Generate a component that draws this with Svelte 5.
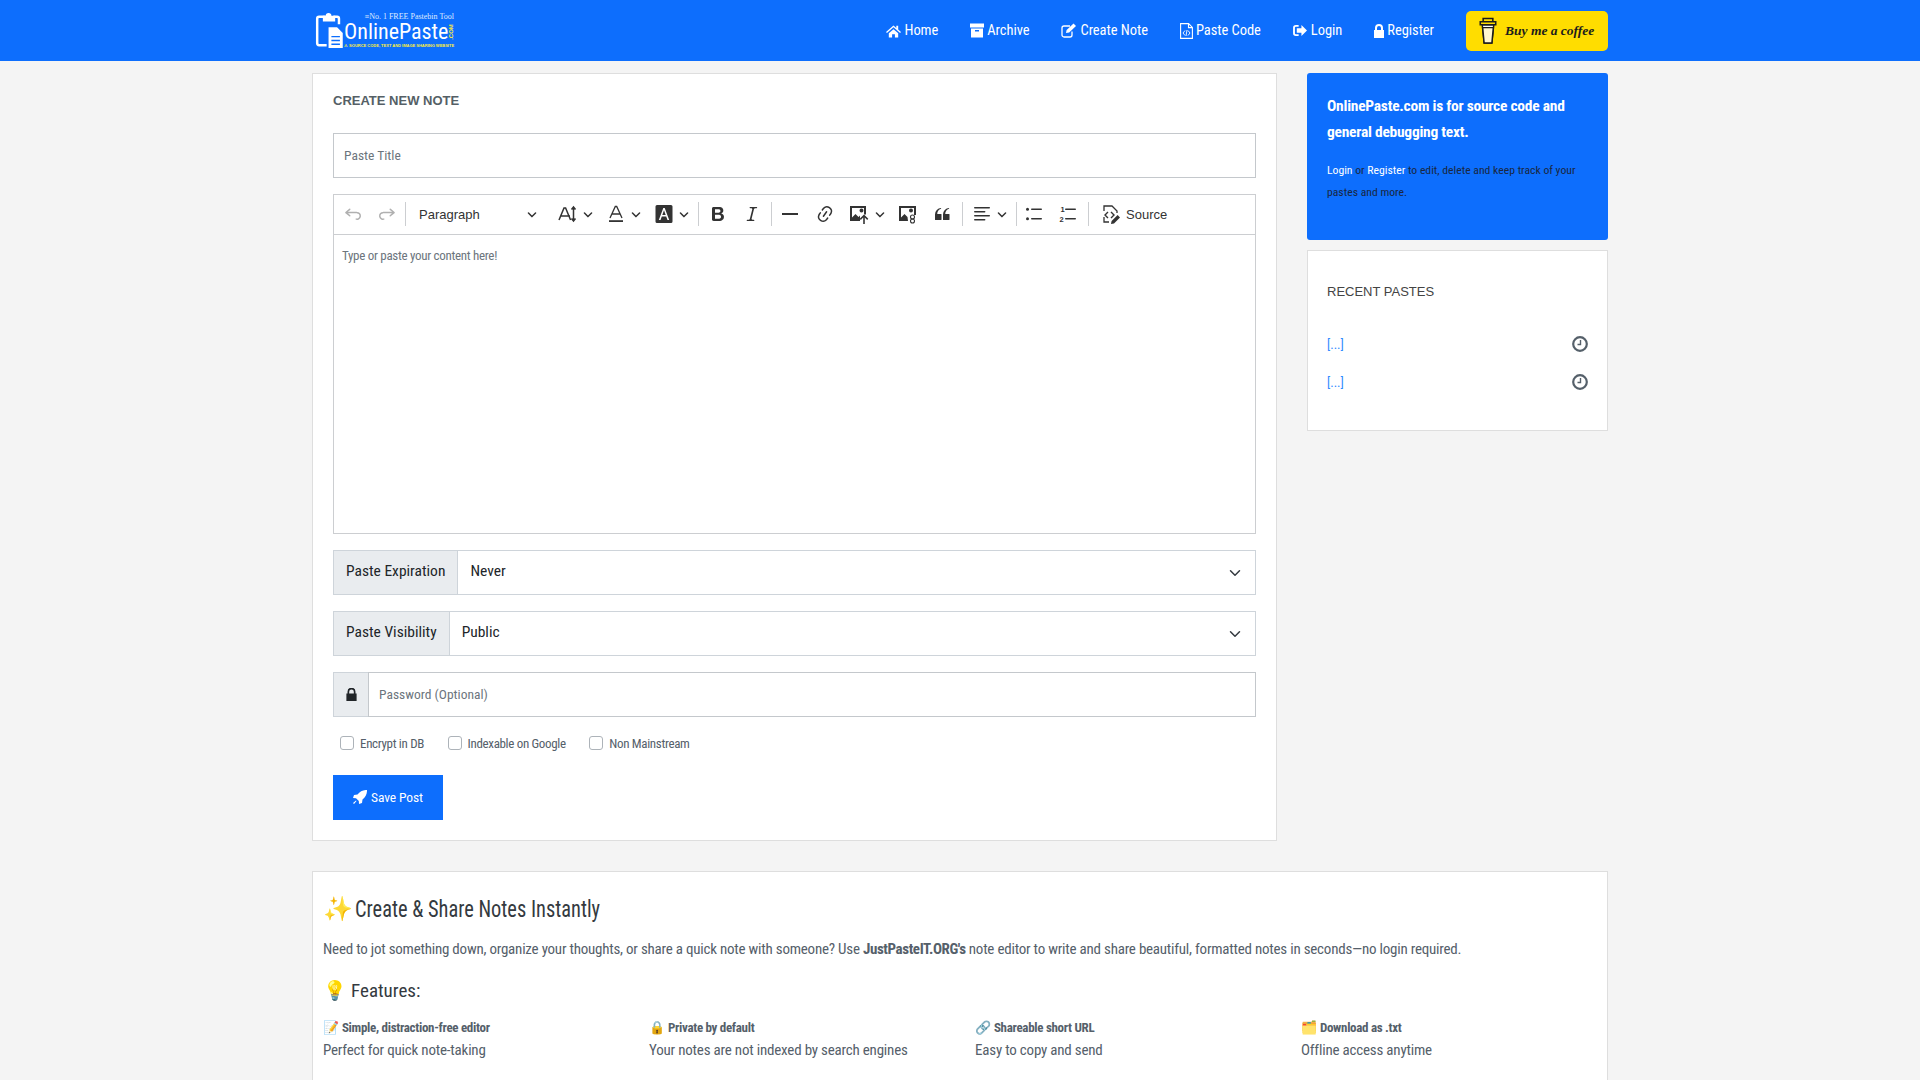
<script>
  const chevron = "M.941 4.523a.75.75 0 1 1 1.06-1.06l3.006 3.005 3.005-3.005a.75.75 0 1 1 1.06 1.06l-3.549 3.55a.75.75 0 0 1-1.168-.136L.941 4.523z";
  const features = [
    { emoji: "📝", title: "Simple, distraction-free editor", text: "Perfect for quick note-taking" },
    { emoji: "🔒", title: "Private by default", text: "Your notes are not indexed by search engines" },
    { emoji: "🔗", title: "Shareable short URL", text: "Easy to copy and send" },
    { emoji: "🗂️", title: "Download as .txt", text: "Offline access anytime" }
  ];
</script>

<nav class="navbar">
  <div class="container nav-inner">
    <div class="logo">
      <svg class="logo-icon" viewBox="0 0 30 38" width="29" height="36">
        <path d="M11 4h-7a2 2 0 0 0-2 2v26a2 2 0 0 0 2 2h8M19 4h4a2 2 0 0 1 2 2v6" fill="none" stroke="#fff" stroke-width="2.6"/>
        <path d="M8 3h3a3 3 0 0 1 6 0h4v6H8z" fill="#fff"/>
        <path d="M14 15h9l6 6v16H14z" fill="#fff"/>
        <path d="M17 25h9M17 29h9M17 33h9" stroke="#0d6efd" stroke-width="1.4"/>
      </svg>
      <div class="logo-text">
        <div class="logo-top">≡No. 1 FREE Pastebin Tool</div>
        <div class="logo-main">OnlinePaste<span class="logo-com">.COM</span></div>
        <div class="logo-sub">⚠ SOURCE CODE, TEXT AND IMAGE SHARING WEBSITE</div>
      </div>
    </div>
    <div class="nav-links">
      <a href="#a">
        <svg viewBox="0 0 16 14" width="15" height="14"><path d="M8 1 0 8l1 1 7-6 7 6 1-1-3-2.6V1.500h-2v2.200zM3 9.500 8 5l5 4.500V14H9.500v-3.500h-3V14H3z" fill="#fff"/></svg>
        Home</a>
      <a href="#a">
        <svg viewBox="0 0 14 14" width="14" height="15"><path d="M0 0h14v4H0zM1 5h12v9H1zM5 6.500v1.500h4V6.500z" fill="#fff" fill-rule="evenodd"/></svg>
        Archive</a>
      <a href="#a">
        <svg viewBox="0 0 16 15" width="16" height="15"><path d="M11 8.500V12a2 2 0 0 1-2 2H3a2 2 0 0 1-2-2V5a2 2 0 0 1 2-2h6" fill="none" stroke="#fff" stroke-width="1.300"/><path d="M5 10l.6-3L12.500.5l2.500 2.500L8.200 9.500z" fill="#fff"/></svg>
        Create Note</a>
      <a href="#a">
        <svg viewBox="0 0 13 16" width="13" height="16"><path d="M.6.6h8l3.800 3.800v11H.6zM8.500.6v4h4" fill="none" stroke="#fff" stroke-width="1.100"/><path d="M5 7.500 3 10l2 2.500M8 7.500l2 2.500-2 2.500M7 7l-1 6" fill="none" stroke="#fff" stroke-width=".9"/></svg>
        Paste Code</a>
      <a href="#a">
        <svg viewBox="0 0 16 14" width="15" height="13"><path d="M6 1H3a3 3 0 0 0-3 3v6a3 3 0 0 0 3 3h3v-2H3a1 1 0 0 1-1-1V4a1 1 0 0 1 1-1h3z" fill="#fff"/><path d="M4 4.500h5V1l6 6-6 6V9.500H4z" fill="#fff"/></svg>
        Login</a>
      <a href="#a">
        <svg viewBox="0 0 10 14" width="10" height="14"><path d="M0 6h1V4a4 4 0 0 1 8 0v2h1v8H0zm3 0h4V4a2 2 0 0 0-4 0z" fill="#fff"/></svg>
        Register</a>
      <div class="coffee">
        <svg viewBox="0 0 20 30" width="20" height="29">
          <path d="M4 9l2 19h8l2-19z" fill="#fff" stroke="#1c1c1c" stroke-width="1.500"/>
          <path d="M4.500 12l1.500 16h8l1.500-16z" fill="#fff7d0" stroke="#1c1c1c" stroke-width="1.500"/>
          <path d="M2 6h16v3H2zM5 2.500h10V6H5z" fill="#ffdd00" stroke="#1c1c1c" stroke-width="1.600"/>
        </svg>
        <span>Buy me a coffee</span>
      </div>
    </div>
  </div>
</nav>

<main class="container">
  <div class="top-row">
    <section class="card main-card">
      <h1>CREATE NEW NOTE</h1>
      <input class="title-input" type="text" placeholder="Paste Title" />
      <div class="editor">
        <div class="toolbar">
          <span class="tb w34 muted"><svg viewBox="0 0 20 20" width="20" height="20"><path d="M5.042 9.367l2.189 1.837a.75.75 0 0 1-.965 1.149l-3.788-3.18a.747.747 0 0 1-.21-.284.75.75 0 0 1 .17-.945L6.23 4.762a.75.75 0 1 1 .964 1.15L4.863 7.866h8.917A.75.75 0 0 1 14 7.9a4 4 0 1 1-1.477 7.718l.344-1.489a2.5 2.5 0 1 0 1.094-4.73l.008-.032H5.042z"/></svg></span>
          <span class="tb w34 muted"><svg viewBox="0 0 20 20" width="20" height="20"><path d="M14.958 9.367l-2.189 1.837a.75.75 0 0 0 .965 1.149l3.788-3.18a.747.747 0 0 0 .21-.284.75.75 0 0 0-.17-.945L13.77 4.762a.75.75 0 1 0-.964 1.15l2.331 1.955H6.22A.75.75 0 0 0 6 7.9a4 4 0 1 0 1.477 7.718l-.344-1.489A2.5 2.5 0 1 1 6.039 9.4l-.008-.032h8.927z"/></svg></span>
          <span class="sep"></span>
          <span class="tb paragraph"><span>Paragraph</span><svg class="chev" viewBox="0 0 10 10"><path d={chevron}/></svg></span>
          <span class="tb w49"><svg viewBox="0 0 20 20" width="20" height="20"><path d="M1 16 6 4h1.600l5 12M3 12h9" fill="none" stroke="#333" stroke-width="1.500"/><path d="M15.500 3.500v13M13.500 5.500l2-2.500 2 2.500M13.500 14.500l2 2.500 2-2.500" fill="none" stroke="#333" stroke-width="1.500"/></svg><svg class="chev" viewBox="0 0 10 10"><path d={chevron}/></svg></span>
          <span class="tb w47"><svg viewBox="0 0 20 20" width="20" height="20"><path d="M4 14 9.300 2.500h1.400L16 14M6 10h8" fill="none" stroke="#333" stroke-width="1.300"/><path d="M3 16.200h14V18H3z" fill="#333"/></svg><svg class="chev" viewBox="0 0 10 10"><path d={chevron}/></svg></span>
          <span class="tb w49"><svg viewBox="0 0 20 20" width="20" height="20"><path fill-rule="evenodd" d="M3 1h14a1.500 1.500 0 0 1 1.500 1.500v15A1.500 1.500 0 0 1 17 19H3a1.500 1.500 0 0 1-1.500-1.500v-15A1.500 1.500 0 0 1 3 1zm6.300 3L4.800 16h1.700l1.300-3.500h4.400l1.300 3.500h1.700L10.700 4zM8.300 11 10 6.200 11.700 11z" fill="#333"/></svg><svg class="chev" viewBox="0 0 10 10"><path d={chevron}/></svg></span>
          <span class="sep s2"></span>
          <span class="tb w34"><svg viewBox="0 0 20 20" width="20" height="20"><path d="M10.187 17H5.773c-.637 0-1.092-.138-1.364-.415-.273-.277-.409-.718-.409-1.323V4.738c0-.617.14-1.062.419-1.332.279-.27.73-.406 1.354-.406h4.68c.69 0 1.288.041 1.793.124.506.083.96.242 1.36.478.341.197.644.447.906.75a3.262 3.262 0 0 1 .808 2.162c0 1.401-.722 2.426-2.167 3.075C15.05 10.175 16 11.315 16 13.01a3.756 3.756 0 0 1-2.296 3.504 6.1 6.1 0 0 1-1.517.377c-.571.073-1.238.11-2 .11zm-.217-6.217H7v4.087h3.069c1.977 0 2.965-.69 2.965-2.072 0-.707-.256-1.22-.768-1.537-.512-.319-1.277-.478-2.296-.478zM7 5.130v3.619h2.606c.729 0 1.292-.067 1.690-.2a1.600 1.600 0 0 0 .91-.765c.165-.267.247-.566.247-.897 0-.707-.26-1.176-.778-1.409-.519-.232-1.310-.348-2.375-.348H7z"/></svg></span>
          <span class="tb w34"><svg viewBox="0 0 20 20" width="20" height="20"><path d="m9.586 14.633.021.004c-.036.335.095.655.393.962.082.083.173.15.274.201h1.474a.6.6 0 1 1 0 1.2H5.304a.6.6 0 0 1 0-1.2h1.150c.474-.07.809-.182 1.005-.334.157-.122.291-.32.404-.597l2.416-9.550a1.053 1.053 0 0 0-.281-.823 1.120 1.120 0 0 0-.442-.296H8.150a.6.6 0 0 1 0-1.2h6.443a.6.6 0 1 1 0 1.2h-1.195c-.376.056-.65.155-.823.296-.215.175-.423.439-.623.79l-2.366 9.347z"/></svg></span>
          <span class="sep s2"></span>
          <span class="tb w34 hr"><svg viewBox="0 0 20 20" width="20" height="20"><path d="M2 9h16v2H2z"/></svg></span>
          <span class="tb w34"><svg viewBox="0 0 20 20" width="20" height="20"><path d="m11.077 15 .991-1.416a.75.75 0 1 1 1.229.86l-1.148 1.64a.748.748 0 0 1-.217.206 5.251 5.251 0 0 1-8.503-5.955.741.741 0 0 1 .12-.274l1.147-1.639a.75.75 0 1 1 1.228.86L4.933 10.700l.006.003a3.750 3.750 0 0 0 6.132 4.294l.006.004zm5.494-5.335a.748.748 0 0 1-.12.274l-1.147 1.639a.75.75 0 1 1-1.228-.86l.86-1.230a3.750 3.750 0 0 0-6.144-4.301l-.86 1.229a.75.75 0 0 1-1.229-.86l1.148-1.640a.748.748 0 0 1 .217-.206 5.251 5.251 0 0 1 8.503 5.955zm-4.563-2.532a.75.75 0 0 1 .184 1.045l-3.155 4.505a.75.75 0 1 1-1.229-.86l3.155-4.506a.75.75 0 0 1 1.045-.184z"/></svg></span>
          <span class="tb w49"><svg viewBox="0 0 21 20" width="21" height="20"><path fill-rule="evenodd" d="M1 2h16v8.500h-2V4H3v9.500l3.500-3.500 3 3L11 11.500V17H1zm11.500 2.500a2 2 0 1 1 0 4 2 2 0 0 1 0-4z"/><path d="M15 10.500l4.300 4.300-1.100 1.100-2.400-2.400V20h-1.600v-6.500l-2.400 2.400-1.100-1.100z"/></svg><svg class="chev" viewBox="0 0 10 10"><path d={chevron}/></svg></span>
          <span class="tb w34"><svg viewBox="0 0 20 20" width="20" height="20"><path fill-rule="evenodd" d="M1 2h17v9h-2V4H3v9.500l3.500-3.500 3 3L10 17H1zm12 2.500a2 2 0 1 1 0 4 2 2 0 0 1 0-4z"/><circle cx="14.500" cy="13" r="2" fill="none" stroke="#333" stroke-width="1.100"/><circle cx="14.500" cy="17" r="2" fill="none" stroke="#333" stroke-width="1.100"/></svg></span>
          <span class="tb w34"><svg viewBox="0 0 20 20" width="20" height="20"><path d="M3 10.423a6.500 6.500 0 0 1 6.056-6.408l.038.67C6.448 5.423 5.354 7.663 5.220 10H9c.552 0 .5.432.5.986v4.511c0 .554-.448.503-1 .503h-5c-.552 0-.5-.449-.5-1.003v-4.574zm8 0a6.500 6.500 0 0 1 6.056-6.408l.038.67c-2.646.739-3.740 2.979-3.873 5.315H17c.552 0 .5.432.5.986v4.511c0 .554-.448.503-1 .503h-5c-.552 0-.5-.449-.5-1.003v-4.574z"/></svg></span>
          <span class="sep s3"></span>
          <span class="tb w47"><svg viewBox="0 0 20 20" width="20" height="20"><path d="M2 3.750c0-.414.336-.75.75-.75h14.500a.75.75 0 1 1 0 1.500H2.750A.75.75 0 0 1 2 3.750zm0 8c0-.414.336-.75.75-.75h14.500a.75.75 0 1 1 0 1.500H2.750a.75.75 0 0 1-.75-.75zm0 4c0-.414.336-.75.75-.75h9.929a.75.75 0 1 1 0 1.500H2.750a.75.75 0 0 1-.75-.75zm0-8c0-.414.336-.75.75-.75h9.929a.75.75 0 1 1 0 1.500H2.750A.75.75 0 0 1 2 7.750z"/></svg><svg class="chev" viewBox="0 0 10 10"><path d={chevron}/></svg></span>
          <span class="sep s4"></span>
          <span class="tb w34"><svg viewBox="0 0 20 20" width="20" height="20"><path d="M7 5.250a.75.75 0 0 1 .75-.75h9.500a.75.75 0 1 1 0 1.500h-9.500A.75.75 0 0 1 7 5.250zm0 9.500a.75.75 0 0 1 .75-.75h9.500a.75.75 0 1 1 0 1.500h-9.500a.75.75 0 0 1-.75-.75z"/><circle cx="3.500" cy="5.250" r="1.500"/><circle cx="3.500" cy="14.750" r="1.500"/></svg></span>
          <span class="tb w34"><svg viewBox="0 0 20 20" width="20" height="20"><path d="M7 5.250a.75.75 0 0 1 .75-.75h9.500a.75.75 0 1 1 0 1.500h-9.500A.75.75 0 0 1 7 5.250zm0 9.500a.75.75 0 0 1 .75-.75h9.500a.75.75 0 1 1 0 1.500h-9.500a.75.75 0 0 1-.75-.75z"/><text x="2.500" y="8" font-size="7.500" font-weight="700" font-family="Liberation Sans" fill="#333">1</text><text x="1.500" y="17.500" font-size="7.500" font-weight="700" font-family="Liberation Sans" fill="#333">2</text></svg></span>
          <span class="sep s3"></span>
          <span class="tb source"><svg viewBox="0 0 20 20" width="20" height="20"><path d="M3 7V2h8l5 5v2M3 13v5h5" fill="none" stroke="#333" stroke-width="1.300"/><path d="M7 8l-3 3 3 3M10 8l3 3-3 3" fill="none" stroke="#333" stroke-width="1.400"/><path d="M10 20l.6-3 6-6 2.400 2.400-6 6z" fill="#333"/></svg><span>Source</span></span>
        </div>
        <div class="edit-area">Type or paste your content here!</div>
      </div>
      <div class="input-group">
        <span class="addon">Paste Expiration</span>
        <select><option>Never</option></select>
      </div>
      <div class="input-group">
        <span class="addon">Paste Visibility</span>
        <select><option>Public</option></select>
      </div>
      <div class="input-group">
        <span class="addon lock"><svg viewBox="0 0 11 14" width="11" height="13"><path d="M0 6h1.200V4a4.300 4.300 0 0 1 8.600 0v2H11v8H0zm3 0h5V4a2.500 2.500 0 0 0-5 0z" fill="#212529"/></svg></span>
        <input type="password" placeholder="Password (Optional)" />
      </div>
      <div class="checks">
        <label><input type="checkbox" /><span>Encrypt in DB</span></label>
        <label><input type="checkbox" /><span>Indexable on Google</span></label>
        <label><input type="checkbox" /><span>Non Mainstream</span></label>
      </div>
      <button class="save">
        <svg viewBox="0 0 14 14" width="14" height="14"><path d="M14 0c.2 4-1.300 7-4.500 9.500L9 13l-3 1-.2-3L3 8.200 0 8l1-3 3.500-.5C7 1.300 10 -.2 14 0zM3 10.500 3.500 11 1 14l-1-1z" fill="#fff"/></svg>
        Save Post</button>
    </section>

    <aside class="side">
      <div class="info">
        <h2>OnlinePaste.com is for source code and general debugging text.</h2>
        <p><a href="#a">Login</a> or <a href="#a">Register</a> to edit, delete and keep track of your pastes and more.</p>
      </div>
      <div class="card recent">
        <h3>RECENT PASTES</h3>
        <ul>
          {#each [0, 1] as i}
            <li>
              <a href="#a">[...]</a>
              <svg viewBox="0 0 16 16" width="16" height="16"><circle cx="8" cy="8" r="6.800" fill="none" stroke="#55606a" stroke-width="2.200"/><path d="M8.500 4v4.500H5.500" fill="none" stroke="#55606a" stroke-width="1.400"/></svg>
            </li>
          {/each}
        </ul>
      </div>
    </aside>
  </div>

  <section class="card about">
    <h2><span class="emoji">✨</span><span class="squeeze">Create &amp; Share Notes Instantly</span></h2>
    <p>Need to jot something down, organize your thoughts, or share a quick note with someone? Use <strong>JustPasteIT.ORG's</strong> note editor to write and share beautiful, formatted notes in seconds—no login required.</p>
    <h3><span class="emoji">💡</span> Features:</h3>
    <div class="features">
      {#each features as f}
        <div>
          <div class="f-title"><span class="emoji">{f.emoji}</span> {f.title}</div>
          <div class="f-text">{f.text}</div>
        </div>
      {/each}
    </div>
  </section>
</main>

<style>
  :global(body) {
    margin: 0;
    background: #f4f4f4;
    color: #55606a;
    font-family: "Liberation Sans Narrow", "Roboto Condensed", "Open Sans Condensed", "DejaVu Sans Condensed", "Open Sans", sans-serif;
    font-stretch: condensed;
    font-size: 15px;
    overflow: hidden;
  }
  * { box-sizing: border-box; }
  .container { width: 1296px; margin: 0 auto; }
  .navbar { background: #0d6efd; height: 61px; }
  .nav-inner { display: flex; justify-content: space-between; align-items: center; height: 61px; }
  .logo { display: flex; align-items: center; margin-left: 3px; }
  .logo-text { display: flex; flex-direction: column; width: 110px; color: #fff; }
  .logo-top { font: 8px/9px "Liberation Serif", serif; text-align: right; color: #dfeaff; white-space: nowrap; }
  .logo-main { font-size: 22px; line-height: 21px; white-space: nowrap; position: relative; }
  .logo-com { position: absolute; right: 3px; top: 11px; width: 0; height: 0; font: 700 6px/6px "Liberation Sans", sans-serif; color: #ffee33; transform: rotate(-90deg); white-space: nowrap; display: flex; align-items: center; justify-content: center; }
  .logo-sub { font: 700 4px/7px "Liberation Sans", sans-serif; color: #ffee33; white-space: nowrap; }
  .nav-links { display: flex; align-items: center; }
  .nav-links a { display: flex; align-items: center; gap: 3px; color: #fff; text-decoration: none; padding: 0 16px; font-size: 14.500px; letter-spacing: -.05px; }
  .coffee { display: flex; align-items: center; gap: 7px; background: #ffdd00; border-radius: 5px; width: 142px; height: 40px; padding-left: 12px; margin-left: 16px; color: #1c1c1c; }
  .coffee span { font: italic 700 13.500px "Liberation Serif", serif; white-space: nowrap; }

  .top-row { display: flex; gap: 30px; margin-top: 12px; align-items: flex-start; }
  .card { background: #fff; border: 1px solid #dedede; }
  .main-card { width: 965px; height: 768px; padding: 18px 20px 20px; }
  .main-card h1 { font: 700 13px/17px "Liberation Sans", sans-serif; color: #555f66; margin: 0 0 24px; }
  .title-input, .input-group input { height: 45px; border: 1px solid #c4c8cc; padding: 0 10px 2px; font: inherit; font-size: 13.500px; width: 100%; outline: none; background: #fff; display: block; }
  input::placeholder { color: #6c757d; }
  .editor { margin-top: 16px; }
  .toolbar { display: flex; align-items: center; height: 41px; border: 1px solid #ccced1; padding: 0 0 1px 2px; background: #fff; }
  .tb { display: flex; align-items: center; justify-content: center; flex: none; height: 34px; color: #333; }
  .tb svg { fill: #333; flex: none; }
  .muted svg { fill: #b0b0b0; }
  .chev { width: 10px; height: 10px; margin-left: 5px; }
  .w34 { width: 34px; }
  .w47 { width: 47px; }
  .w49 { width: 49px; }
  .sep { flex: none; width: 1px; height: 24px; background: #ccced1; margin: 0 1px; }
  .s2 { margin: 0 2px; }
  .s3 { margin: 0 3px; }
  .s4 { margin: 0 0 0 3px; }
  .hr { margin-left: -1px; margin-right: 1px; }
  .paragraph { width: 144px; justify-content: space-between; padding: 0 14px 0 12px; font: 13px "Liberation Sans", sans-serif; color: #333; }
  .source { gap: 5px; padding-left: 9px; font: 13px "Liberation Sans", sans-serif; color: #333; }
  .edit-area { height: 299px; border: 1px solid #ccced1; border-top: 0; padding: 13px 8px; font-size: 13px; letter-spacing: -.3px; color: #6c757d; background: #fff; }
  .input-group { display: flex; height: 45px; margin-top: 16px; }
  .addon { display: flex; align-items: center; padding: 0 12px 3px; background: #e9ecef; border: 1px solid #ced4da; border-right: 0; color: #212529; font-size: 15.500px; white-space: nowrap; }
  .lock { padding: 0 11.500px; }
  .input-group select { flex: 1; min-width: 0; height: 45px; appearance: none; border: 1px solid #ced4da; padding: 0 12px 3px; font: inherit; font-size: 15.500px; color: #212529; background: #fff url("data:image/svg+xml,%3csvg xmlns='http://www.w3.org/2000/svg' viewBox='0 0 16 16'%3e%3cpath fill='none' stroke='%23343a40' stroke-linecap='round' stroke-linejoin='round' stroke-width='2' d='m2 5 6 6 6-6'/%3e%3c/svg%3e") no-repeat right 12px center / 16px 12px; }
  .input-group input { flex: 1; min-width: 0; }
  .checks { display: flex; gap: 23.500px; margin-top: 16px; padding-left: 7px; height: 20px; align-items: center; }
  .checks label { display: flex; align-items: center; gap: 6px; font-size: 13px; letter-spacing: -.33px; }
  .checks input { appearance: none; width: 14px; height: 14px; border: 1px solid #adb3b9; border-radius: 3px; margin: 0; background: #fff; }
  .save { display: flex; align-items: center; justify-content: center; gap: 4px; width: 110px; height: 45px; margin-top: 22px; padding: 0 0 2px; background: #0d6efd; border: 0; color: #fff; font: inherit; font-size: 13.500px; letter-spacing: -.1px; }

  .side { width: 301px; display: flex; flex-direction: column; gap: 10px; }
  .info { background: #0d6efd; border-radius: 3px; padding: 20px; height: 167px; color: #1a2740; }
  .info h2 { color: #fff; font-size: 15.500px; letter-spacing: -.25px; line-height: 26px; margin: 0 0 14px; }
  .info p { font-size: 11.700px; line-height: 22px; margin: 0; }
  .info a { color: #fff; text-decoration: none; }
  .recent { height: 181px; padding: 32px 19px 30px; }
  .recent h3 { font: 400 13px/17px "Liberation Sans", sans-serif; color: #444; margin: 0 0 25px; }
  .recent ul { list-style: none; margin: 0; padding: 0; }
  .recent li { display: flex; justify-content: space-between; align-items: center; height: 38px; }
  .recent a { color: #2f8cff; text-decoration: none; font-size: 13px; }
  .about { margin-top: 30px; padding: 22px 10px; height: 300px; }
  .about h2 { font-size: 24px; font-weight: 400; line-height: 30px; color: #343a40; margin: 0 0 14px; }
  .squeeze { display: inline-block; transform: scaleX(.85); transform-origin: left center; margin-left: 2px; }
  .about p { font-size: 15px; letter-spacing: -.22px; line-height: 22px; margin: 0 0 19px; }
  .about strong { font-weight: 700; letter-spacing: -.4px; }
  .about h3 { font-size: 19px; font-weight: 400; line-height: 24px; color: #343a40; margin: 0 0 14px; }
  .features { display: grid; grid-template-columns: repeat(4, 326px); }
  .f-title { font-weight: 700; font-size: 13px; letter-spacing: -.3px; line-height: 22px; }
  .f-text { font-size: 15px; letter-spacing: -.2px; line-height: 22px; }
  .emoji { font-family: "Noto Color Emoji", sans-serif; letter-spacing: 0; }
</style>
